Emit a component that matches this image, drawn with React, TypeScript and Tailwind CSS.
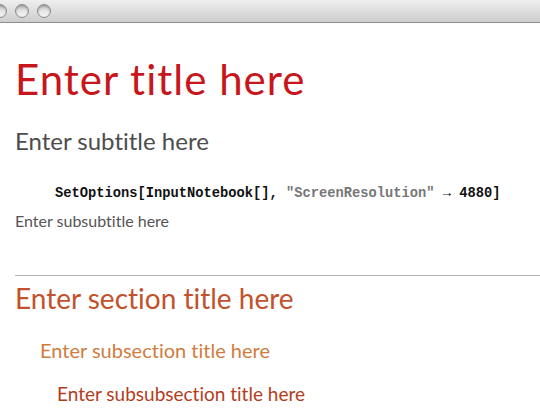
import React from "react";

function TrafficLight({ className = "" }: { className?: string }) {
  return (
    <span
      className={`block h-[14px] w-[14px] shrink-0 rounded-full border border-[#8c8c8c] bg-gradient-to-b from-[#b9b9b9] via-[#e6e6e6] to-[#f4f4f4] shadow-[inset_0_1px_2px_rgba(0,0,0,0.25)] ${className}`}
    />
  );
}

export default function App() {
  return (
    <div className="flex h-[416px] w-[540px] flex-col overflow-hidden bg-white font-['Lato','Noto_Sans',sans-serif] [font-variant-ligatures:none]">
      <div className="flex h-[23px] shrink-0 items-center gap-[8px] border-b border-[#8e8e8e] bg-gradient-to-b from-[#efefef] to-[#cdcdcd]">
        <TrafficLight className="-ml-[7px] bg-gradient-to-b from-[#3b4a5e] via-[#7b8799] to-[#c8cfd9]" />
        <TrafficLight />
        <TrafficLight />
      </div>

      <div className="flex flex-col pl-[15px]">
        <h1 className="mt-[31px] text-[42px] leading-[50px] tracking-[1px] text-[#c8161d]">
          Enter title here
        </h1>
        <h2 className="mt-[22px] text-[24px] leading-[29px] text-[#4d4d4d]">
          Enter subtitle here
        </h2>
        <p className="mt-[30px] pl-[40px] font-['Liberation_Mono',monospace] text-[13.75px] font-bold leading-[17px] text-[#111]">
          SetOptions[InputNotebook[], <span className="text-[#777]">"ScreenResolution"</span> → 4880]
        </p>
        <h3 className="mt-[9px] text-[16px] leading-[20px] text-[#555]">
          Enter subsubtitle here
        </h3>
        <hr className="mt-[44px] border-t border-[#b4b4b4]" />
        <h2 className="mt-[5px] text-[28px] leading-[34px] text-[#c2522c]">
          Enter section title here
        </h2>
        <h3 className="mt-[23px] pl-[25px] text-[20px] leading-[24px] text-[#cf7c3e]">
          Enter subsection title here
        </h3>
        <h4 className="mt-[20px] pl-[42px] text-[19px] leading-[23px] text-[#b33c1c]">
          Enter subsubsection title here
        </h4>
      </div>
    </div>
  );
}
